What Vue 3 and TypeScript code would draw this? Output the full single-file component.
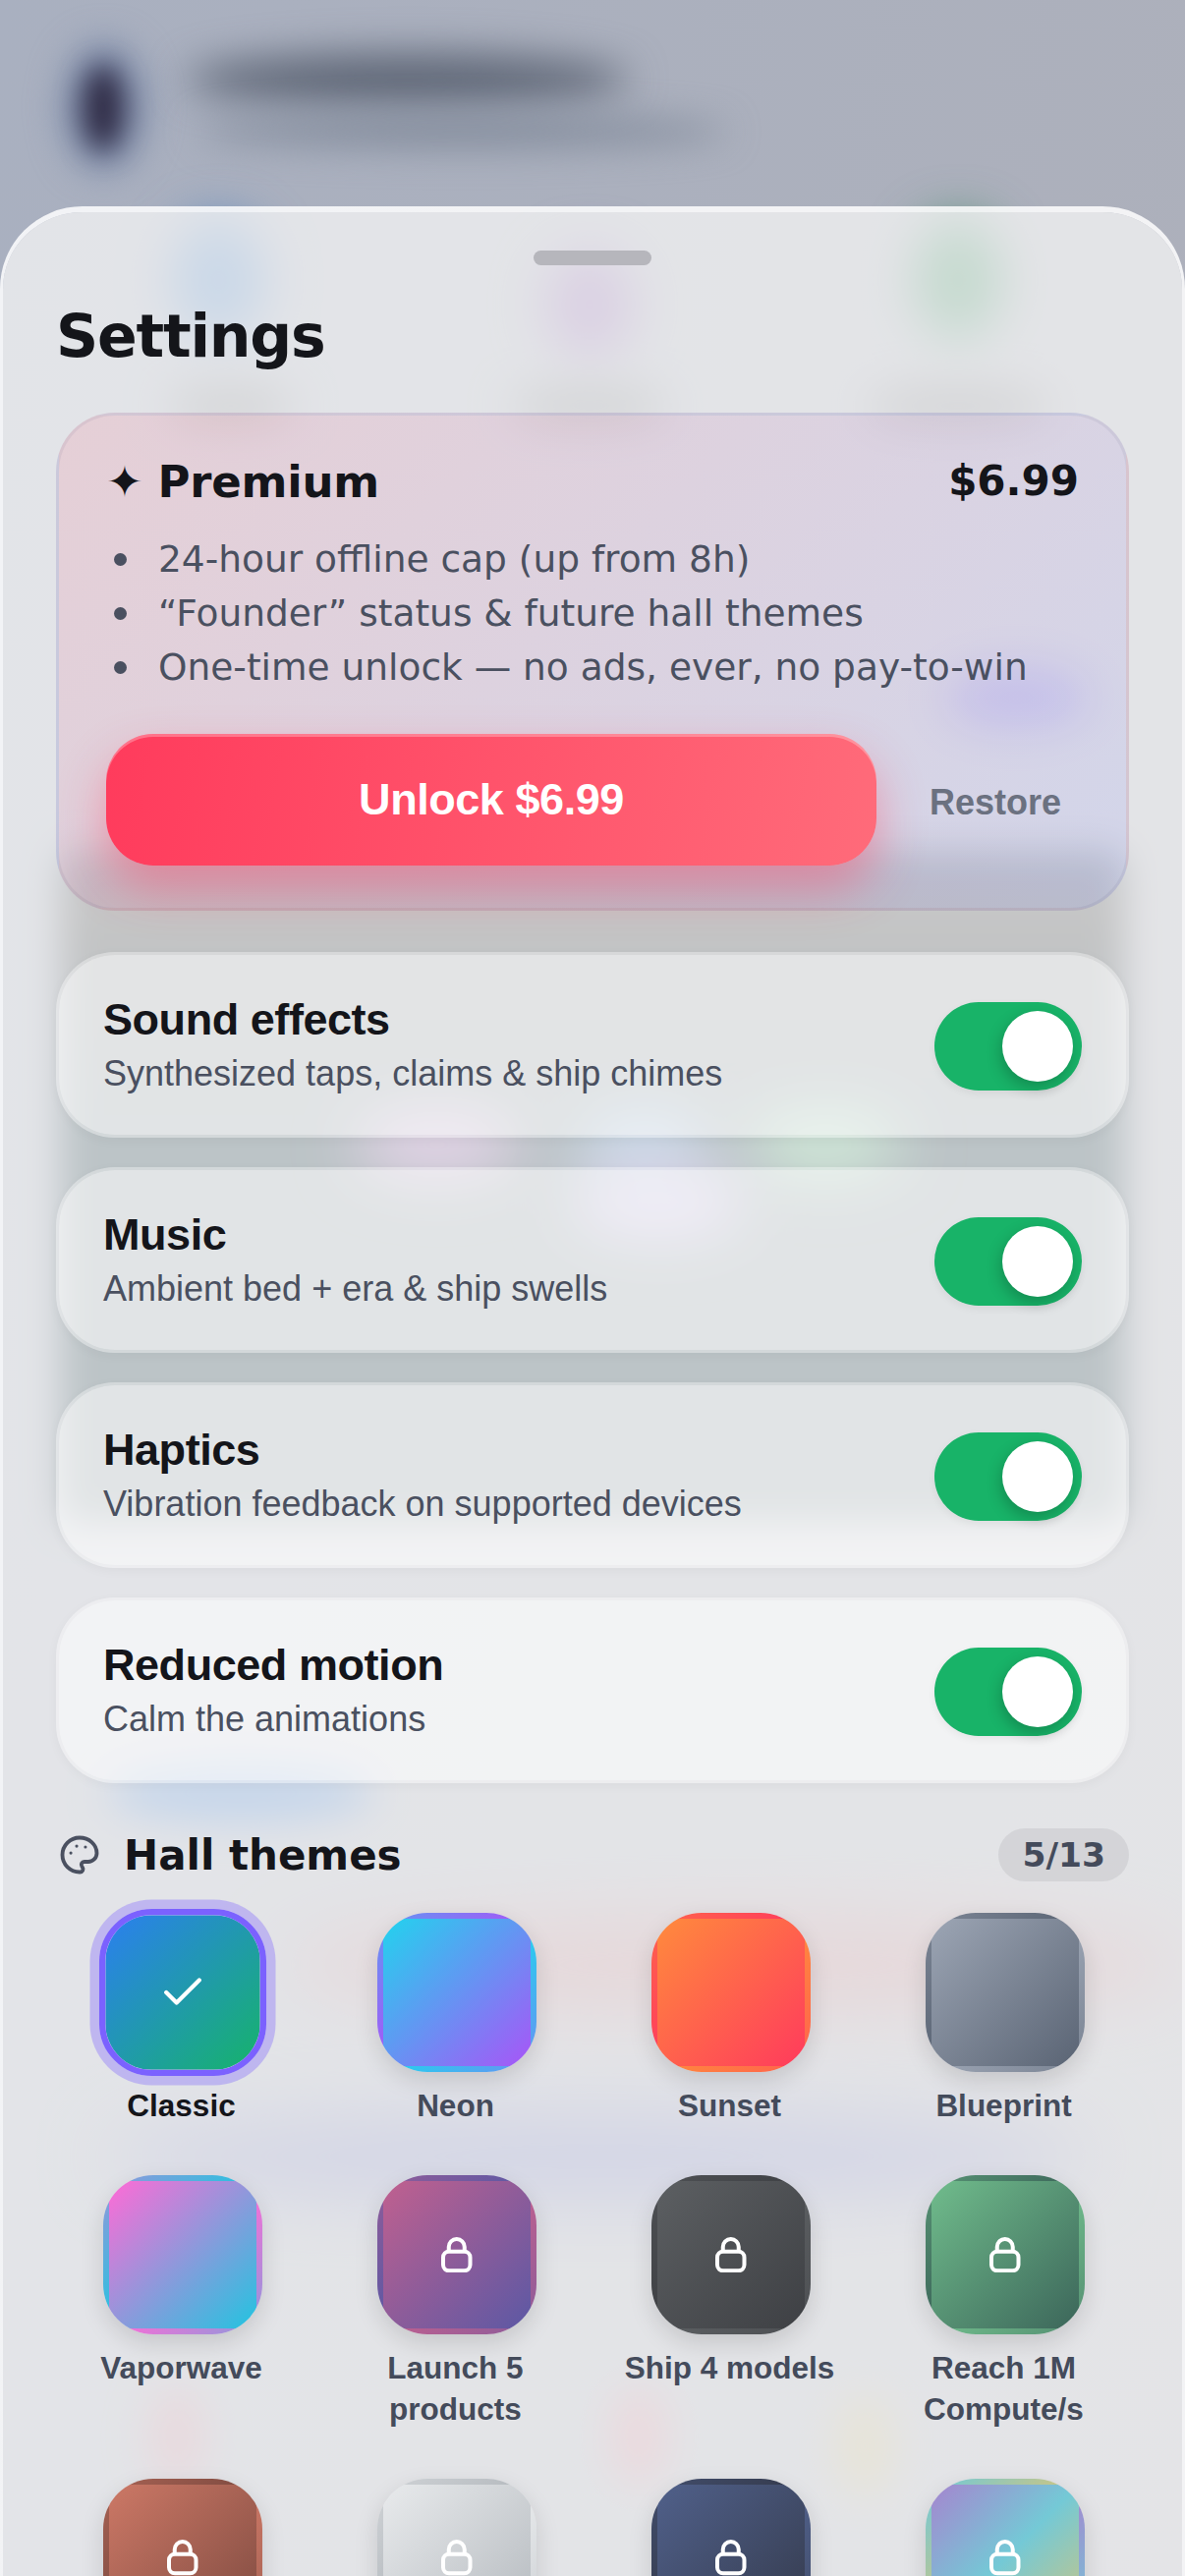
<template>
  <div class="screen">
    <!-- 被遮住的页面,模糊成色块 -->
    <div class="backdrop">
      <i
        v-for="(blob, i) in blobs"
        :key="i"
        class="blob"
        :style="{
          left: blob.x + 'px',
          top: blob.y + 'px',
          width: blob.w + 'px',
          height: blob.h + 'px',
          background: blob.c,
          borderRadius: blob.r ?? '50%',
          filter: `blur(${blob.b}px)`,
        }"
      ></i>
    </div>

    <div class="sheet">
      <div class="handle"></div>
      <h1 class="title">Settings</h1>

      <section class="premium">
        <div class="premium-head">
          <h2><span class="star">✦</span>Premium</h2>
          <span class="price">$6.99</span>
        </div>
        <ul class="perks">
          <li v-for="perk in perks" :key="perk">{{ perk }}</li>
        </ul>
        <div class="premium-actions">
          <button class="unlock">Unlock $6.99</button>
          <button class="restore">Restore</button>
        </div>
      </section>

      <div class="rows">
        <div v-for="row in rows" :key="row.title" class="row">
          <div class="row-text">
            <div class="row-title">{{ row.title }}</div>
            <div class="row-sub">{{ row.sub }}</div>
          </div>
          <div class="toggle"><span class="knob"></span></div>
        </div>
      </div>

      <div class="themes-head">
        <svg class="palette" viewBox="0 0 24 24" fill="none" stroke="currentColor" stroke-width="2.2" stroke-linecap="round" stroke-linejoin="round">
          <path d="M12 22a1 1 0 0 1 0-20 10 9 0 0 1 10 9 5 5 0 0 1-5 5h-2.25a1.75 1.75 0 0 0-1.4 2.8l.3.4a1.75 1.75 0 0 1-1.4 2.8z" />
          <circle cx="10.3" cy="6.9" r=".9" fill="currentColor" stroke="none" />
          <circle cx="15.4" cy="7.4" r=".9" fill="currentColor" stroke="none" />
          <circle cx="6.9" cy="10.9" r=".9" fill="currentColor" stroke="none" />
        </svg>
        <h2>Hall themes</h2>
        <span class="count">5/13</span>
      </div>

      <div class="themes">
        <div v-for="(theme, i) in themes" :key="i" class="theme" :class="{ selected: theme.selected }">
          <div class="tile" :style="{ backgroundImage: theme.bg }">
            <svg v-if="theme.selected" class="check" viewBox="0 0 24 24" fill="none" stroke="currentColor" stroke-width="2" stroke-linecap="round" stroke-linejoin="round">
              <path d="M20 6 9 17l-5-5" />
            </svg>
            <svg v-else-if="theme.locked" class="lock" viewBox="0 0 31.5 36.5" fill="none" stroke="currentColor" stroke-width="4" stroke-linejoin="round">
              <rect x="2" y="14.7" width="27.5" height="19.6" rx="6" />
              <path d="M7.75 14.7V10a8 8 0 0 1 16 0v4.7" />
            </svg>
          </div>
          <div v-if="theme.name" class="theme-name">{{ theme.name }}</div>
        </div>
      </div>
    </div>
  </div>
</template>

<script setup lang="ts">
interface Blob {
  x: number
  y: number
  w: number
  h: number
  c: string
  b: number
  r?: string
}

interface Theme {
  name?: string
  bg: string
  selected?: boolean
  locked?: boolean
}

const grad = (a: string, b: string) => `linear-gradient(135deg, ${a}, ${b})`

const blobs: Blob[] = [
  { x: 64, y: 44, w: 84, h: 130, c: '#7c8aa8', b: 18 },
  { x: 84, y: 66, w: 42, h: 88, c: '#2e2a44', b: 14 },
  { x: 190, y: 55, w: 450, h: 52, c: '#5c6474', b: 20 },
  { x: 200, y: 118, w: 540, h: 32, c: '#838c9c', b: 18 },
  { x: 175, y: 225, w: 95, h: 120, c: '#4a80c0', b: 26 },
  { x: 555, y: 255, w: 90, h: 110, c: '#8a64ac', b: 26 },
  { x: 930, y: 225, w: 90, h: 120, c: '#38885e', b: 26 },
  { x: 170, y: 395, w: 130, h: 36, c: '#6a6e74', b: 22 },
  { x: 520, y: 395, w: 160, h: 36, c: '#6a6e74', b: 22 },
  { x: 880, y: 395, w: 190, h: 36, c: '#6a6e74', b: 22 },
  { x: 960, y: 680, w: 150, h: 60, c: '#5a50d0', b: 24 },
  { x: 62, y: 865, w: 1082, h: 685, c: 'linear-gradient(180deg, #2c3e50, #3a3a3a 9%, #2a3034 14%, #12303c 40%)', b: 18, r: '20px' },
  { x: 360, y: 1130, w: 170, h: 70, c: '#b070c0', b: 30 },
  { x: 590, y: 1130, w: 130, h: 70, c: '#5090d0', b: 30 },
  { x: 760, y: 1130, w: 160, h: 70, c: '#60c080', b: 30 },
  { x: 580, y: 1190, w: 180, h: 70, c: '#a080e0', b: 30 },
  { x: 110, y: 1795, w: 270, h: 60, c: '#3a78c8', b: 20 },
  { x: 290, y: 1950, w: 916, h: 100, c: '#b88088', b: 36 },
  { x: 110, y: 2150, w: 1000, h: 90, c: '#6c74b4', b: 36 },
  { x: 150, y: 2430, w: 60, h: 100, c: '#c08898', b: 20 },
  { x: 620, y: 2430, w: 60, h: 100, c: '#c88898', b: 20 },
  { x: 850, y: 2440, w: 60, h: 100, c: '#bcb080', b: 20 },
]

const perks = [
  '24-hour offline cap (up from 8h)',
  '“Founder” status & future hall themes',
  'One-time unlock — no ads, ever, no pay-to-win',
]

const rows = [
  { title: 'Sound effects', sub: 'Synthesized taps, claims & ship chimes' },
  { title: 'Music', sub: 'Ambient bed + era & ship swells' },
  { title: 'Haptics', sub: 'Vibration feedback on supported devices' },
  { title: 'Reduced motion', sub: 'Calm the animations' },
]

const themes: Theme[] = [
  { name: 'Classic', bg: grad('#2b7ff0', '#16b36a'), selected: true },
  { name: 'Neon', bg: grad('#22d3ee', '#a855f7') },
  { name: 'Sunset', bg: grad('#ff8a3d', '#ff3b5c') },
  { name: 'Blueprint', bg: grad('#9ca5b4', '#5a6474') },
  { name: 'Vaporwave', bg: grad('#ff6bd6', '#22c4e0') },
  { name: 'Launch 5 products', bg: grad('#c0608f', '#5c58a4'), locked: true },
  { name: 'Ship 4 models', bg: grad('#5c5f62', '#3e4044'), locked: true },
  { name: 'Reach 1M Compute/s', bg: grad('#70bc8c', '#3c665a'), locked: true },
  { bg: grad('#cc7866', '#7e4a40'), locked: true },
  { bg: grad('#e8eaec', '#b4b9be'), locked: true },
  { bg: grad('#50608a', '#343a4c'), locked: true },
  { bg: 'linear-gradient(135deg, #a585cf, #74c9d6, #d0c47e)', locked: true },
]
</script>

<style>
html,
body {
  margin: 0;
  height: 2622px;
  overflow: hidden;
}
</style>

<style scoped>
.screen {
  position: relative;
  width: 1206px;
  height: 2622px;
  overflow: hidden;
  font-family: 'DejaVu Sans', sans-serif;
  background: linear-gradient(100deg, #a9b0c0, #aeb0ba);
  padding-top: 210px;
  box-sizing: border-box;
}

.backdrop {
  position: absolute;
  inset: 0;
}

.blob {
  position: absolute;
  display: block;
}

.sheet {
  position: relative;
  height: 2500px;
  box-sizing: border-box;
  background: rgba(245, 245, 245, 0.75);
  background-clip: padding-box;
  border: 3px solid rgba(255, 255, 255, 0.85);
  border-top-width: 6px;
  border-radius: 84px 84px 0 0;
  padding: 39px 54px 0;
}

.handle {
  width: 120px;
  height: 15px;
  margin: 0 auto 36px;
  border-radius: 8px;
  background: #b6b6bc;
}

.title {
  margin: 0 0 42px;
  font-size: 60px;
  line-height: 72px;
  font-weight: 700;
  letter-spacing: -1.2px;
  color: #14151a;
}

.premium {
  height: 507px;
  box-sizing: border-box;
  padding: 38px 48px 0;
  border: 3px solid rgba(70, 70, 100, 0.08);
  border-radius: 60px;
  background-image: linear-gradient(135deg, rgba(255, 59, 92, 0.12), rgba(90, 110, 255, 0.12));
}

.premium-head {
  display: flex;
  align-items: center;
  justify-content: space-between;
}

.premium-head h2 {
  margin: 0;
  font-size: 45px;
  line-height: 60px;
  font-weight: 700;
  letter-spacing: -0.2px;
  color: #14151a;
}

.star {
  margin-right: 15px;
  font-size: 45px;
  font-weight: 400;
}

.price {
  margin-top: -4px;
  font-size: 42px;
  font-weight: 700;
  color: #14151a;
}

.perks {
  margin: 21px 0 0;
  padding: 0;
  list-style: none;
  font-size: 37.5px;
  line-height: 55px;
  color: #4a5060;
}

.perks li {
  display: flex;
  align-items: center;
  gap: 32px;
}

.perks li::before {
  content: '';
  flex: none;
  width: 13px;
  height: 13px;
  margin-left: 8px;
  border-radius: 50%;
  background: #4a5060;
}

.premium-actions {
  display: flex;
  align-items: center;
  gap: 36px;
  margin-top: 40px;
}

.unlock {
  flex: 1;
  height: 134px;
  box-sizing: border-box;
  border: none;
  border-radius: 48px;
  background: linear-gradient(100deg, #ff3b5c, #ff6b7a);
  box-shadow: inset 0 3px 0 rgba(255, 255, 255, 0.28), 0 24px 48px rgba(255, 59, 92, 0.42);
  font-family: 'Liberation Sans', Arial, sans-serif;
  font-size: 45px;
  font-weight: 700;
  letter-spacing: -0.45px;
  color: #fff;
}

.restore {
  padding: 6px 18px 0;
  border: none;
  background: none;
  font-family: 'Liberation Sans', Arial, sans-serif;
  font-size: 36px;
  font-weight: 700;
  color: #6b7180;
}

.rows {
  display: flex;
  flex-direction: column;
  gap: 30px;
  margin-top: 42px;
  font-family: 'Liberation Sans', Arial, sans-serif;
}

.row {
  display: flex;
  align-items: center;
  justify-content: space-between;
  height: 189px;
  box-sizing: border-box;
  padding: 0 45px;
  border: 3px solid rgba(255, 255, 255, 0.35);
  border-radius: 60px;
  background: rgba(255, 255, 255, 0.55);
  background-clip: padding-box;
  box-shadow: 0 3px 12px rgba(0, 0, 0, 0.04);
}

.row-title {
  font-size: 45px;
  line-height: 54px;
  font-weight: 700;
  letter-spacing: -0.45px;
  color: #14151a;
}

.row-sub {
  margin-top: 4px;
  font-size: 36px;
  line-height: 48px;
  color: #4a5060;
}

.toggle {
  position: relative;
  width: 150px;
  height: 90px;
  margin-top: 3px;
  border-radius: 45px;
  background: #18b368;
  box-shadow: 0 3px 9px rgba(0, 0, 0, 0.06);
}

.knob {
  position: absolute;
  top: 9px;
  right: 9px;
  width: 72px;
  height: 72px;
  border-radius: 50%;
  background: #fff;
  box-shadow: -2px 6px 15px rgba(0, 0, 0, 0.22);
}

.themes-head {
  display: flex;
  align-items: center;
  margin-top: 46px;
  height: 54px;
}

.palette {
  width: 42px;
  height: 42px;
  margin: 0 24px 0 3px;
  color: #4a5060;
}

.themes-head h2 {
  flex: 1;
  margin: 0;
  font-size: 42px;
  font-weight: 700;
  color: #14151a;
}

.count {
  display: flex;
  align-items: center;
  height: 54px;
  padding: 0 24px;
  border-radius: 27px;
  background: rgba(120, 120, 125, 0.14);
  font-size: 34.5px;
  font-weight: 700;
  color: #444b5b;
}

.themes {
  display: grid;
  grid-template-columns: repeat(4, 1fr);
  column-gap: 24px;
  row-gap: 49.5px;
  margin-top: 32px;
  font-family: 'Liberation Sans', Arial, sans-serif;
}

.theme {
  display: flex;
  flex-direction: column;
  align-items: center;
}

.tile {
  display: flex;
  align-items: center;
  justify-content: center;
  flex: none;
  width: 162px;
  height: 162px;
  box-sizing: border-box;
  margin-left: 3px;
  border: 6px solid transparent;
  border-radius: 51px;
  color: #fff;
  box-shadow: 0 9px 24px rgba(0, 0, 0, 0.13);
}

.theme.selected .tile {
  border-color: #7b61ff;
  background-clip: padding-box;
  transform: scale(1.05);
  box-shadow: 0 0 0 9px rgba(123, 97, 255, 0.35);
}

.check {
  width: 48px;
  height: 48px;
}

.lock {
  width: 31.5px;
  height: 36.5px;
}

.theme-name {
  margin-top: 14px;
  font-size: 31.5px;
  line-height: 41.5px;
  font-weight: 700;
  text-align: center;
  color: #444b5b;
}

.theme.selected .theme-name {
  color: #14151a;
}
</style>
